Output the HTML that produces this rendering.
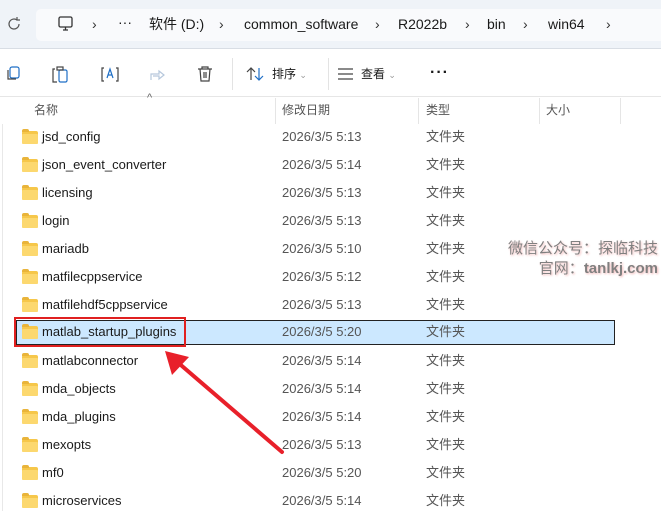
<!DOCTYPE html><html><head><meta charset="utf-8"><style>
*{margin:0;padding:0;box-sizing:border-box}
body{width:661px;height:511px;overflow:hidden;background:#fff;font-family:"Liberation Sans","Noto Sans CJK SC",sans-serif;position:relative;color:#1a1a1a}
.top{position:absolute;left:0;top:0;width:661px;height:49px;background:#eff3f8;border-bottom:1px solid #d8dde4}
.crumb{position:absolute;left:36px;top:9px;width:630px;height:32px;background:#f9fafc;border-radius:5px}
.t{position:absolute;font-size:14px;white-space:nowrap;line-height:17px}
.hdr{position:absolute;top:97px;height:27px;font-size:12px;color:#555;line-height:14px}
.row{position:absolute;left:0;width:661px;height:28px;font-size:13px;line-height:16px}
.row .n{position:absolute;left:42px;top:5px}
.row .d{position:absolute;left:282px;top:5px;color:#555}
.row .k{position:absolute;left:426px;top:5px;color:#555}
.fold{position:absolute;left:22px;top:7px;width:16px;height:13px;background:#f6c74a;border-radius:2px}
.fold:before{content:"";position:absolute;left:0;top:-2px;width:7px;height:3px;background:#e9b43a;border-radius:2px 2px 0 0}
.fold:after{content:"";position:absolute;left:0;top:3px;width:16px;height:10px;background:#fcd86f;border-radius:1px}
.sep{position:absolute;top:98px;width:1px;height:26px;background:#e5e5e5}
.wm{position:absolute;right:3px;font-size:15px;color:#808080;text-shadow:1px 1px 2px #f2b6b6;text-align:right;line-height:18px}
</style></head><body>
<div class="top"><div class="crumb"></div>
<svg style="position:absolute;left:6px;top:16px" width="16" height="16" viewBox="0 0 16 16"><path d="M13 8a5 5 0 1 1-2-4" fill="none" stroke="#555" stroke-width="1.2"/><path d="M11 1v3h3" fill="none" stroke="#555" stroke-width="1.2"/></svg>
<svg style="position:absolute;left:57px;top:15px" width="18" height="18" viewBox="0 0 18 18"><rect x="2" y="2" width="13" height="10" rx="1.5" fill="none" stroke="#333" stroke-width="1.3"/><path d="M6 15h5M8.5 12v3" stroke="#333" stroke-width="1.3"/></svg>
<span class="t" style="left:92px;top:16px;color:#333">›</span>
<span class="t" style="left:118px;top:14px">···</span>
<span class="t" style="left:149px;top:16px">软件 (D:)</span>
<span class="t" style="left:219px;top:16px;color:#333">›</span>
<span class="t" style="left:244px;top:16px">common_software</span>
<span class="t" style="left:375px;top:16px;color:#333">›</span>
<span class="t" style="left:398px;top:16px">R2022b</span>
<span class="t" style="left:465px;top:16px;color:#333">›</span>
<span class="t" style="left:487px;top:16px">bin</span>
<span class="t" style="left:523px;top:16px;color:#333">›</span>
<span class="t" style="left:548px;top:16px">win64</span>
<span class="t" style="left:606px;top:16px;color:#333">›</span>
</div>
<svg style="position:absolute;left:0;top:60px" width="240" height="30" viewBox="0 0 240 30">
<g fill="none" stroke="#1f6fc6" stroke-width="1.2"><rect x="10" y="7" width="9" height="11" rx="2"/><path d="M8 10v9h8" stroke="#444"/></g>
<g fill="none" stroke-width="1.2"><path d="M55 9h-2v13h4" stroke="#444"/><rect x="59" y="10" width="8" height="12" rx="1.5" stroke="#1f6fc6"/><rect x="57" y="7" width="6" height="3" stroke="#444"/></g>
<g fill="none" stroke-width="1.2" stroke="#444"><path d="M104 8h-2v13h2M116 8h2v13h-2"/><path d="M107 18l3-9 3 9M108 15h4" stroke="#1f6fc6"/></g>
<g fill="none" stroke="#b6c7dc" stroke-width="1.2"><path d="M151 20v-6h8v-3l5 4-5 4v-3h-6"/></g>
<g fill="none" stroke="#444" stroke-width="1.2"><path d="M198 9h14M202 9V7h6v2M200 9l1 12h8l1-12M204 12v6M206 12v6"/></g>
</svg>
<div style="position:absolute;left:232px;top:58px;width:1px;height:32px;background:#e3e3e3"></div>
<div style="position:absolute;left:328px;top:58px;width:1px;height:32px;background:#e3e3e3"></div>
<svg style="position:absolute;left:246px;top:65px" width="20" height="18" viewBox="0 0 20 18"><path d="M5 15V3M1 7l4-4 4 4" fill="none" stroke="#444" stroke-width="1.2"/><path d="M13 3v12M9 11l4 4 4-4" fill="none" stroke="#1f6fc6" stroke-width="1.2"/></svg>
<span class="t" style="left:272px;top:66px;font-size:12px">排序 <span style="color:#999;font-size:9px">⌄</span></span>
<svg style="position:absolute;left:337px;top:67px" width="18" height="14"><path d="M1 2h15M1 7h15M1 12h15" stroke="#444" stroke-width="1.2"/></svg>
<span class="t" style="left:361px;top:66px;font-size:12px">查看 <span style="color:#999;font-size:9px">⌄</span></span>
<span class="t" style="left:430px;top:64px;font-size:16px;font-weight:bold;letter-spacing:1px">···</span>
<div style="position:absolute;left:0;top:96px;width:661px;height:1px;background:#e6e6e6"></div>
<span class="t" style="left:147px;top:90px;font-size:11px;color:#666">^</span>
<div class="hdr" style="left:34px;top:103px">名称</div>
<div class="hdr" style="left:282px;top:103px">修改日期</div>
<div class="hdr" style="left:426px;top:103px">类型</div>
<div class="hdr" style="left:546px;top:103px">大小</div>
<div class="sep" style="left:275px"></div><div class="sep" style="left:418px"></div><div class="sep" style="left:539px"></div><div class="sep" style="left:620px"></div>
<div style="position:absolute;left:2px;top:124px;width:1px;height:387px;background:#e8e8e8"></div>
<div style="position:absolute;left:16px;top:320px;width:599px;height:25px;background:#cce8ff;border:1px solid #222"></div>

<div class="row" style="top:124px"><i class="fold"></i><span class="n">jsd_config</span><span class="d">2026/3/5 5:13</span><span class="k">文件夹</span></div>
<div class="row" style="top:152px"><i class="fold"></i><span class="n">json_event_converter</span><span class="d">2026/3/5 5:14</span><span class="k">文件夹</span></div>
<div class="row" style="top:180px"><i class="fold"></i><span class="n">licensing</span><span class="d">2026/3/5 5:13</span><span class="k">文件夹</span></div>
<div class="row" style="top:208px"><i class="fold"></i><span class="n">login</span><span class="d">2026/3/5 5:13</span><span class="k">文件夹</span></div>
<div class="row" style="top:236px"><i class="fold"></i><span class="n">mariadb</span><span class="d">2026/3/5 5:10</span><span class="k">文件夹</span></div>
<div class="row" style="top:264px"><i class="fold"></i><span class="n">matfilecppservice</span><span class="d">2026/3/5 5:12</span><span class="k">文件夹</span></div>
<div class="row" style="top:292px"><i class="fold"></i><span class="n">matfilehdf5cppservice</span><span class="d">2026/3/5 5:13</span><span class="k">文件夹</span></div>
<div class="row" style="top:319px"><i class="fold"></i><span class="n">matlab_startup_plugins</span><span class="d">2026/3/5 5:20</span><span class="k">文件夹</span></div>
<div class="row" style="top:348px"><i class="fold"></i><span class="n">matlabconnector</span><span class="d">2026/3/5 5:14</span><span class="k">文件夹</span></div>
<div class="row" style="top:376px"><i class="fold"></i><span class="n">mda_objects</span><span class="d">2026/3/5 5:14</span><span class="k">文件夹</span></div>
<div class="row" style="top:404px"><i class="fold"></i><span class="n">mda_plugins</span><span class="d">2026/3/5 5:14</span><span class="k">文件夹</span></div>
<div class="row" style="top:432px"><i class="fold"></i><span class="n">mexopts</span><span class="d">2026/3/5 5:13</span><span class="k">文件夹</span></div>
<div class="row" style="top:460px"><i class="fold"></i><span class="n">mf0</span><span class="d">2026/3/5 5:20</span><span class="k">文件夹</span></div>
<div class="row" style="top:488px"><i class="fold"></i><span class="n">microservices</span><span class="d">2026/3/5 5:14</span><span class="k">文件夹</span></div>

<div style="position:absolute;left:14px;top:317px;width:172px;height:30px;border:2px solid #e02020"></div>
<svg style="position:absolute;left:0;top:0" width="661" height="511"><path d="M282 452L175 360" stroke="#e8202a" stroke-width="4" stroke-linecap="round"/><path d="M165 351L189 357L172 375Z" fill="#e8202a"/></svg>
<div class="wm" style="top:240px">微信公众号：探临科技</div>
<div class="wm" style="top:260px">官网：<b>tanlkj.com</b></div>
</body></html>
